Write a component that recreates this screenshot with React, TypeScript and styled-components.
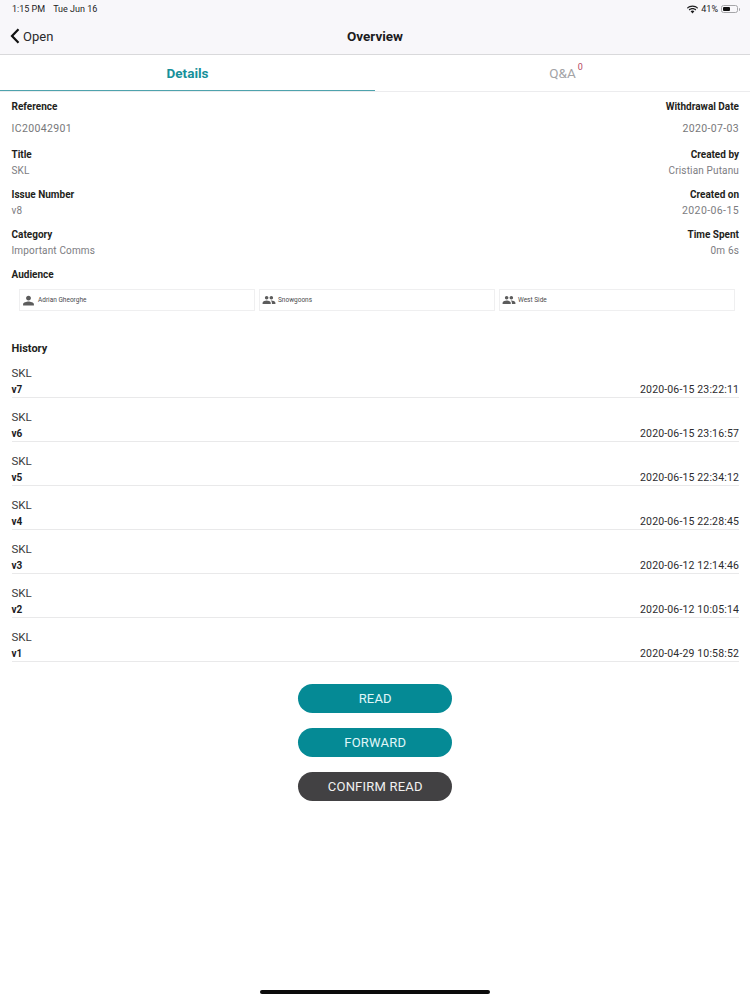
import React from "react";
import styled, { createGlobalStyle } from "styled-components";

const GlobalStyle = createGlobalStyle`
  html, body {
    margin: 0;
    padding: 0;
    background: #fff;
  }
  body {
    font-family: "Roboto", "Liberation Sans", sans-serif;
    color: #1c1c1e;
  }
`;

const fieldRows = [
  { left: ["Title", "SKL"], right: ["Created by", "Cristian Putanu"] },
  { left: ["Issue Number", "v8"], right: ["Created on", "2020-06-15"], digits: true },
  { left: ["Category", "Important Comms"], right: ["Time Spent", "0m 6s"] },
];

const audience = [
  { name: "Adrian Gheorghe", group: false },
  { name: "Snowgoons", group: true },
  { name: "West Side", group: true },
];

const history = [
  { version: "v7", date: "2020-06-15 23:22:11" },
  { version: "v6", date: "2020-06-15 23:16:57" },
  { version: "v5", date: "2020-06-15 22:34:12" },
  { version: "v4", date: "2020-06-15 22:28:45" },
  { version: "v3", date: "2020-06-12 12:14:46" },
  { version: "v2", date: "2020-06-12 10:05:14" },
  { version: "v1", date: "2020-04-29 10:58:52" },
];

function PersonIcon() {
  return (
    <svg width="13" height="13" viewBox="0 0 24 24" fill="#5c5c5c">
      <path d="M12 12c2.700 0 4.500-2 4.500-4.500S14.700 3 12 3 7.500 5 7.500 7.500 9.300 12 12 12zm0 2c-3.300 0-10 1.700-10 5v2h20v-2c0-3.300-6.700-5-10-5z" />
    </svg>
  );
}

function GroupIcon() {
  return (
    <svg width="14" height="14" viewBox="0 0 24 24" fill="#5c5c5c">
      <path d="M16 11c1.700 0 3-1.300 3-3s-1.300-3-3-3-3 1.300-3 3 1.300 3 3 3zm-8 0c1.700 0 3-1.300 3-3S9.700 5 8 5 5 6.300 5 8s1.300 3 3 3zm0 2c-2.300 0-7 1.200-7 3.500V19h14v-2.500C15 14.200 10.300 13 8 13zm8 0c-.3 0-.6 0-1 .1 1.200.8 2 2 2 3.400V19h6v-2.500c0-2.300-4.700-3.500-7-3.500z" />
    </svg>
  );
}

function WifiIcon() {
  return (
    <svg width="11" height="9" viewBox="0 0 22 17" fill="#1c1c1e">
      <path d="M11 3.200c3.700 0 7 1.400 9.500 3.700L22 5.200C19.100 2.300 15.200.6 11 .6S2.900 2.300 0 5.200l1.500 1.700C4 4.600 7.300 3.200 11 3.200z" />
      <path d="M11 8.200c2.300 0 4.300.8 5.900 2.200l1.600-1.700C16.500 6.800 13.900 5.700 11 5.700s-5.500 1.100-7.500 3l1.600 1.700c1.600-1.400 3.600-2.200 5.900-2.200z" />
      <path d="M11 10.600c-1.500 0-2.800.6-3.800 1.500L11 16.400l3.800-4.300c-1-.9-2.300-1.500-3.800-1.500z" />
    </svg>
  );
}

export default function App() {
  return (
    <Page>
      <GlobalStyle />
      <Header>
        <StatusBar>
          <StatusGroup>
            <span>1:15 PM</span>
            <span>Tue Jun 16</span>
          </StatusGroup>
          <BatteryGroup>
            <WifiIcon />
            <span>41%</span>
            <Battery>
              <BatteryFill />
            </Battery>
          </BatteryGroup>
        </StatusBar>
        <NavBar>
          <BackButton>
            <svg width="10" height="16" viewBox="0 0 10 16" fill="none">
              <path d="M8.500 1.200 2 8l6.500 6.800" stroke="#111" strokeWidth="2.200" />
            </svg>
            <span>Open</span>
          </BackButton>
          <NavTitle>Overview</NavTitle>
        </NavBar>
      </Header>

      <Tabs>
        <Tab $active>Details</Tab>
        <Tab>
          <TabLabel>
            Q&amp;A
            <TabCount>0</TabCount>
          </TabLabel>
        </Tab>
      </Tabs>

      <Content>
        <TopRow>
          <div>
            <FieldLabel>Reference</FieldLabel>
            <TopValue>IC20042901</TopValue>
          </div>
          <RightField>
            <FieldLabel>Withdrawal Date</FieldLabel>
            <TopValue>2020-07-03</TopValue>
          </RightField>
        </TopRow>

        {fieldRows.map((row) => (
          <FieldRow key={row.left[0]}>
            <div>
              <FieldLabel>{row.left[0]}</FieldLabel>
              <FieldValue>{row.left[1]}</FieldValue>
            </div>
            <RightField>
              <FieldLabel>{row.right[0]}</FieldLabel>
              <FieldValue $digits={row.digits}>{row.right[1]}</FieldValue>
            </RightField>
          </FieldRow>
        ))}

        <FieldLabel>Audience</FieldLabel>
        <Chips>
          {audience.map((item) => (
            <Chip key={item.name} $group={item.group}>
              {item.group ? <GroupIcon /> : <PersonIcon />}
              <span>{item.name}</span>
            </Chip>
          ))}
        </Chips>

        <HistoryTitle>History</HistoryTitle>
        {history.map((item) => (
          <HistoryRow key={item.version}>
            <HistoryName>SKL</HistoryName>
            <HistoryMeta>
              <strong>{item.version}</strong>
              <span>{item.date}</span>
            </HistoryMeta>
          </HistoryRow>
        ))}

        <Actions>
          <ActionButton>READ</ActionButton>
          <ActionButton>FORWARD</ActionButton>
          <ActionButton $dark>CONFIRM READ</ActionButton>
        </Actions>
      </Content>

      <HomeIndicator />
    </Page>
  );
}

const Page = styled.div`
  position: relative;
  width: 750px;
  height: 1000px;
  overflow: hidden;
  background: #fff;
`;

const Header = styled.header`
  height: 54px;
  background: #f8f7fa;
  border-bottom: 1px solid #d9d9db;
`;

const StatusBar = styled.div`
  height: 18px;
  padding: 0 12px;
  display: flex;
  align-items: center;
  justify-content: space-between;
  font-size: 9px;
  line-height: 18px;
  color: #1c1c1e;
`;

const StatusGroup = styled.div`
  display: flex;
  gap: 8px;
`;

const BatteryGroup = styled.div`
  display: flex;
  align-items: center;
  gap: 3px;
`;

const Battery = styled.div`
  position: relative;
  width: 17px;
  height: 8px;
  box-sizing: border-box;
  border: 1px solid #a5a5a8;
  border-radius: 2.500px;
  padding: 1px;
  &::after {
    content: "";
    position: absolute;
    right: -3px;
    top: 1.500px;
    width: 1.500px;
    height: 3px;
    background: #a5a5a8;
    border-radius: 0 1px 1px 0;
  }
`;

const BatteryFill = styled.div`
  width: 50%;
  height: 100%;
  background: #111;
  border-radius: 1px;
`;

const NavBar = styled.div`
  position: relative;
  height: 36px;
  display: flex;
  align-items: center;
  padding-left: 10px;
`;

const BackButton = styled.div`
  display: flex;
  align-items: center;
  gap: 3px;
  font-size: 13px;
  color: #2a2a2c;
`;

const NavTitle = styled.div`
  position: absolute;
  left: 0;
  right: 0;
  text-align: center;
  font-size: 13.500px;
  font-weight: 700;
  color: #1c1c1e;
`;

const Tabs = styled.div`
  display: grid;
  grid-template-columns: 1fr 1fr;
  height: 36px;
  border-bottom: 1px solid #ececee;
`;

const Tab = styled.div<{ $active?: boolean }>`
  display: flex;
  align-items: center;
  justify-content: center;
  height: 36px;
  box-sizing: border-box;
  font-size: 13.500px;
  font-weight: ${(p) => (p.$active ? 700 : 400)};
  color: ${(p) => (p.$active ? "#17909a" : "#a3a3a6")};
  border-bottom: ${(p) => (p.$active ? "1px solid #4ea3ad" : "none")};
`;

const TabLabel = styled.span`
  position: relative;
`;

const TabCount = styled.span`
  position: absolute;
  left: 100%;
  top: -3px;
  margin-left: 2px;
  font-size: 9px;
  color: #b5475f;
`;

const Content = styled.main`
  padding: 8px 11px 0 11.500px;
`;

const TopRow = styled.div`
  display: flex;
  justify-content: space-between;
  height: 48px;
`;

const FieldRow = styled.div`
  display: flex;
  justify-content: space-between;
  height: 40px;
`;

const RightField = styled.div`
  text-align: right;
`;

const FieldLabel = styled.div`
  font-size: 10px;
  line-height: 14px;
  font-weight: 700;
  color: #1f1f21;
`;

const TopValue = styled.div`
  margin-top: 8px;
  font-size: 10.500px;
  line-height: 14px;
  letter-spacing: 0.35px;
  color: #77777a;
`;

const FieldValue = styled.div<{ $digits?: boolean }>`
  margin-top: 2px;
  font-size: ${(p) => (p.$digits ? "10.500px" : "10px")};
  line-height: 14px;
  letter-spacing: ${(p) => (p.$digits ? "0.4px" : "0.15px")};
  color: #7c7c7f;
`;

const Chips = styled.div`
  display: grid;
  grid-template-columns: repeat(3, 236px);
  gap: 4px;
  margin: 7px 0 0 7.500px;
`;

const Chip = styled.div<{ $group?: boolean }>`
  height: 22px;
  box-sizing: border-box;
  display: flex;
  align-items: center;
  gap: ${(p) => (p.$group ? "2px" : "3px")};
  padding-left: 2px;
  border: 1px solid #efeff0;
  font-size: 6.500px;
  color: #4a4a4c;
`;

const HistoryTitle = styled.div`
  margin-top: 31px;
  margin-bottom: 9px;
  font-size: 11px;
  line-height: 14px;
  font-weight: 700;
  color: #1f1f21;
`;

const HistoryRow = styled.div`
  height: 32px;
  margin-bottom: 11px;
  border-bottom: 1px solid #e9e9ea;
`;

const HistoryName = styled.div`
  font-size: 11.500px;
  line-height: 16px;
  color: #3a3a3c;
`;

const HistoryMeta = styled.div`
  display: flex;
  justify-content: space-between;
  margin-top: 2px;
  font-size: 10.500px;
  line-height: 14px;
  color: #2c2c2e;
  strong {
    font-size: 10px;
    font-weight: 700;
    color: #1c1c1e;
  }
  span {
    letter-spacing: 0.15px;
  }
`;

const Actions = styled.div`
  display: flex;
  flex-direction: column;
  align-items: center;
  gap: 15px;
  margin-top: 22px;
`;

const ActionButton = styled.div<{ $dark?: boolean }>`
  width: 154px;
  height: 29px;
  border-radius: 15px;
  display: flex;
  align-items: center;
  justify-content: center;
  font-size: 13px;
  letter-spacing: 0.2px;
  color: ${(p) => (p.$dark ? "#f1f1f1" : "#e0f7f9")};
  background: ${(p) => (p.$dark ? "#424143" : "#058a95")};
`;

const HomeIndicator = styled.div`
  position: absolute;
  left: 260px;
  bottom: 6px;
  width: 230px;
  height: 4px;
  border-radius: 2px;
  background: #0b0b0b;
`;
